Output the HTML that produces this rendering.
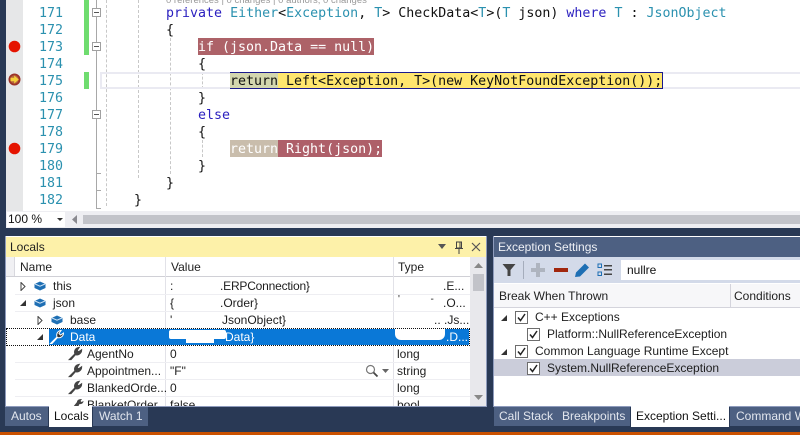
<!DOCTYPE html>
<html><head><meta charset="utf-8">
<style>
html,body{margin:0;padding:0;background:#293955;width:800px;height:435px;overflow:hidden}
#r{position:relative;width:800px;height:435px;overflow:hidden;background:#293955;font-family:"Liberation Sans",sans-serif;font-size:12px;color:#1e1e1e}
#r div,#r span.a,#r svg{position:absolute}
.c{font-family:"DejaVu Sans Mono","Liberation Mono",monospace;font-size:13.3px;line-height:17px;height:17px;white-space:pre;color:#111;margin-top:1px}
.n{font-family:"DejaVu Sans Mono","Liberation Mono",monospace;font-size:13.3px;line-height:17px;height:17px;left:39px;color:#2b91af;margin-top:1px}
.k{color:#2a1fbf}.t{color:#2b91af}
.u{white-space:pre;line-height:17px;height:17px;font-size:12px}
.hl{height:1px;background:#eeeef2}
.gd{width:0;border-left:1px dashed #c8c8c8}
.bx{width:7px;height:7px;border:1px solid #a0a0a0;background:#fff;left:92px}
.bx:after{content:"";position:absolute;left:1px;top:3px;width:5px;height:1px;background:#555}
.cb{width:11px;height:11px;border:1px solid #6d6d6d;background:#fff}
</style></head><body><div id="r">

<!-- editor -->
<div style="left:6px;top:0;width:794px;height:211px;background:#fff"></div>
<div style="left:6px;top:0;width:17px;height:211px;background:#e6e7e8"></div>
<div style="left:84px;top:0;width:5px;height:55px;background:#6fdc6f"></div>
<div style="left:84px;top:72px;width:5px;height:17px;background:#6fdc6f"></div>
<div style="left:96px;top:0;width:1px;height:209px;background:#a8a8a8"></div>
<div style="left:97px;top:173px;width:4px;height:1px;background:#a8a8a8"></div>
<div style="left:97px;top:190px;width:4px;height:1px;background:#a8a8a8"></div>
<div style="left:97px;top:208px;width:4px;height:1px;background:#a8a8a8"></div>
<div class="gd" style="left:106px;top:0;height:206px"></div>
<div class="gd" style="left:138px;top:0;height:178px"></div>
<div class="gd" style="left:170px;top:38px;height:136px"></div>
<div class="gd" style="left:202px;top:72px;height:17px"></div>
<div class="gd" style="left:202px;top:140px;height:17px"></div>

<div style="left:100px;top:72px;width:700px;height:13px;border:2px solid #eaeaf2;border-right:0"></div>
<div style="left:230px;top:72px;width:432px;height:15px;background:#ffe66e;border:1px solid #1a1a8c;border-left:0"></div>
<div style="left:230px;top:73px;width:48px;height:15px;background:#d3d6ae"></div>
<div style="left:230px;top:72px;width:48px;height:1px;background:#1a1a8c"></div>
<div style="left:198px;top:38px;width:176px;height:17px;background:#ad6268"></div>
<div style="left:230px;top:140px;width:48px;height:17px;background:#c9bdac"></div>
<div style="left:278px;top:140px;width:104px;height:17px;background:#ae5f69"></div>

<div class="c" style="left:166px;top:-9px;font-size:9.5px;color:#9a9a9a;font-family:'Liberation Sans',sans-serif">0 references | 0 changes | 0 authors, 0 changes</div>

<div class="n" style="top:4px">171</div>
<div class="n" style="top:21px">172</div>
<div class="n" style="top:38px">173</div>
<div class="n" style="top:55px">174</div>
<div class="n" style="top:72px">175</div>
<div class="n" style="top:89px">176</div>
<div class="n" style="top:106px">177</div>
<div class="n" style="top:123px">178</div>
<div class="n" style="top:140px">179</div>
<div class="n" style="top:157px">180</div>
<div class="n" style="top:174px">181</div>
<div class="n" style="top:191px">182</div>

<div class="bx" style="top:8px"></div>
<div class="bx" style="top:42px"></div>
<div class="bx" style="top:110px"></div>

<div class="c" style="left:166px;top:4px"><span class="k">private</span> <span class="t">Either</span>&lt;<span class="t">Exception</span>, <span class="t">T</span>&gt; CheckData&lt;<span class="t">T</span>&gt;(<span class="t">T</span> json) <span class="k">where</span> <span class="t">T</span> : <span class="t">JsonObject</span></div>
<div class="c" style="left:166px;top:21px">{</div>
<div class="c" style="left:198px;top:38px;color:#fff">if (json.Data == null)</div>
<div class="c" style="left:198px;top:55px">{</div>
<div class="c" style="left:230px;top:72px">return Left&lt;Exception, T&gt;(new KeyNotFoundException());</div>
<div class="c" style="left:198px;top:89px">}</div>
<div class="c" style="left:198px;top:106px"><span class="k">else</span></div>
<div class="c" style="left:198px;top:123px">{</div>
<div class="c" style="left:230px;top:140px;color:#fff">return Right(json);</div>
<div class="c" style="left:198px;top:157px">}</div>
<div class="c" style="left:166px;top:174px">}</div>
<div class="c" style="left:134px;top:191px">}</div>

<svg style="left:8px;top:40px" width="14" height="14"><circle cx="6.500" cy="6.500" r="5.800" fill="#e51400"/></svg>
<svg style="left:8px;top:142px" width="14" height="14"><circle cx="6.500" cy="6.500" r="5.800" fill="#e51400"/></svg>
<svg style="left:8px;top:73px" width="14" height="14"><circle cx="6.500" cy="6.500" r="6" fill="#9c3328"/><circle cx="6.500" cy="6.500" r="4.200" fill="#b8663c"/><path d="M2.500 4.800h3.700V2.500L10.800 6.500 6.200 10.500V8.200H2.500z" fill="#f4cf3a"/></svg>

<!-- zoom bar -->
<div style="left:6px;top:211px;width:794px;height:17px;background:#eeeef2"></div>
<div style="left:7px;top:212px;width:58px;height:15px;background:#fff"></div>
<div class="u" style="left:8px;top:211px;color:#111">100 %</div>
<svg style="left:57px;top:218px" width="7" height="4"><path d="M0 0h6L3 3z" fill="#333"/></svg>
<svg style="left:72px;top:215px" width="6" height="10"><path d="M5 0v9L0 4.500z" fill="#8a8a90"/></svg>
<div style="left:83px;top:215px;width:717px;height:9px;background:#c2c3c9"></div>

<!-- Locals -->
<div style="left:5px;top:236px;width:482px;height:171px;background:#fff"></div>
<div style="left:6px;top:237px;width:481px;height:20px;background:#fdf1a9"></div>
<div class="u" style="left:10px;top:239px;color:#222">Locals</div>
<svg style="left:438px;top:244px" width="9" height="6"><path d="M0 0h8L4 5z" fill="#555"/></svg>
<svg style="left:454px;top:241px" width="10" height="13"><path d="M2.500 1h5v6h-5zM1 7.500h8M5 8v5M6 1v6" fill="none" stroke="#444"/></svg>
<svg style="left:471px;top:242px" width="10" height="10"><path d="M1 1l8 8M9 1L1 9" stroke="#555" stroke-width="1.200"/></svg>

<div style="left:6px;top:257px;width:464px;height:19px;background:#fff;border-bottom:1px solid #d0d0d6"></div>
<div style="left:6px;top:257px;width:8px;height:19px;background:#f0f0f3"></div>
<div style="left:14px;top:257px;width:1px;height:19px;background:#d8d8de"></div>
<div style="left:165px;top:257px;width:1px;height:150px;background:#e2e2e8"></div>
<div style="left:393px;top:257px;width:1px;height:150px;background:#e2e2e8"></div>
<div class="u" style="left:20px;top:259px">Name</div>
<div class="u" style="left:171px;top:259px">Value</div>
<div class="u" style="left:398px;top:259px">Type</div>

<div class="hl" style="left:15px;top:294px;width:455px"></div>
<div class="hl" style="left:15px;top:311px;width:455px"></div>
<div class="hl" style="left:15px;top:362px;width:455px"></div>
<div class="hl" style="left:15px;top:379px;width:455px"></div>
<div class="hl" style="left:15px;top:396px;width:455px"></div>

<svg style="left:20px;top:282px" width="6" height="9"><path d="M1 .5L5 4.500 1 8.500z" fill="#fff" stroke="#444"/></svg>
<svg style="left:20px;top:299px" width="7" height="8"><path d="M6 1v6H0z" fill="#333"/></svg>
<svg style="left:37px;top:316px" width="6" height="9"><path d="M1 .5L5 4.500 1 8.500z" fill="#fff" stroke="#444"/></svg>
<svg style="left:34px;top:281px" width="12" height="10"><path d="M.5 3L6 .5 11.500 3v4L6 9.500.5 7z" fill="#1e6fb4"/><path d="M1 3l5 2.200L11 3" stroke="#cfe3f4" fill="none"/></svg>
<svg style="left:34px;top:298px" width="12" height="10"><path d="M.5 3L6 .5 11.500 3v4L6 9.500.5 7z" fill="#1e6fb4"/><path d="M1 3l5 2.200L11 3" stroke="#cfe3f4" fill="none"/></svg>
<svg style="left:51px;top:315px" width="12" height="10"><path d="M.5 3L6 .5 11.500 3v4L6 9.500.5 7z" fill="#1e6fb4"/><path d="M1 3l5 2.200L11 3" stroke="#cfe3f4" fill="none"/></svg>

<div class="u" style="left:53px;top:278px">this</div>
<div class="u" style="left:53px;top:295px">json</div>
<div class="u" style="left:70px;top:312px">base</div>
<div class="u" style="left:170px;top:278px">:</div>
<div class="u" style="left:220px;top:278px;letter-spacing:-.2px">.ERPConnection}</div>
<div class="u" style="left:170px;top:295px">{</div>
<div class="u" style="left:220px;top:295px">.Order}</div>
<div class="u" style="left:170px;top:312px">'</div>
<div class="u" style="left:222px;top:312px">JsonObject}</div>
<div class="u" style="left:443px;top:278px">.E...</div>
<div class="u" style="left:443px;top:295px">.O...</div>
<div class="u" style="left:434px;top:312px">.. .Js...</div>
<div class="u" style="left:398px;top:291px;font-size:10px">'&nbsp;&nbsp;&nbsp;&nbsp;&nbsp;&nbsp;&nbsp;&nbsp;&nbsp;&nbsp;&nbsp;-</div>

<!-- selected row -->
<div style="left:49px;top:329px;width:420px;height:16px;background:#0a78d7"></div>
<div style="left:6px;top:328px;width:462px;height:16px;border:1px dotted #111"></div>
<svg style="left:37px;top:333px" width="7" height="8"><path d="M6 1v6H0z" fill="#333"/></svg>
<svg style="left:49px;top:329px" width="16" height="16"><path d="M1.500 14.500L8 8C7 5 8.500 2 12 1.500L10 4.500l1.500 1.500 3-2C14.500 7.500 11 9.500 8.500 8.500L3 14.500z" fill="#333" stroke="#fff"/></svg>
<div class="u" style="left:70px;top:329px;color:#fff">Data</div>
<div style="left:169px;top:330px;width:57px;height:9px;background:#fff;border-radius:2px"></div>
<div style="left:186px;top:339px;width:28px;height:4px;background:#fff"></div>
<div class="u" style="left:225px;top:329px;color:#fff">Data}</div>
<div style="left:395px;top:329px;width:50px;height:11px;background:#fff;border-radius:0 0 6px 6px"></div>
<div class="u" style="left:446px;top:329px;color:#fff">.D...</div>

<svg style="left:68px;top:346px" width="15" height="15"><path d="M1.500 13.500L7 8C6 5 7.500 2 11 1.500L9 4.500l1.500 1.500 3-2C13.500 7.500 10 9.500 7.500 8.500L3 13.500z" fill="#444" stroke="#444" stroke-width="1.300"/></svg>
<svg style="left:68px;top:363px" width="15" height="15"><path d="M1.500 13.500L7 8C6 5 7.500 2 11 1.500L9 4.500l1.500 1.500 3-2C13.500 7.500 10 9.500 7.500 8.500L3 13.500z" fill="#444" stroke="#444" stroke-width="1.300"/></svg>
<svg style="left:68px;top:380px" width="15" height="15"><path d="M1.500 13.500L7 8C6 5 7.500 2 11 1.500L9 4.500l1.500 1.500 3-2C13.500 7.500 10 9.500 7.500 8.500L3 13.500z" fill="#444" stroke="#444" stroke-width="1.300"/></svg>
<svg style="left:72px;top:399px" width="12" height="8"><path d="M1 8L5 3C5 1 7 0 10 0L8.500 2l1 1 2-1c0 2-2 3.500-4 3L6 8z" fill="#444"/></svg>

<div class="u" style="left:87px;top:346px">AgentNo</div>
<div class="u" style="left:87px;top:363px">Appointmen...</div>
<div class="u" style="left:87px;top:380px">BlankedOrde...</div>
<div style="left:87px;top:397px;width:80px;height:9px;overflow:hidden"><span class="u" style="position:absolute;top:0;left:0">BlanketOrder</span></div>
<div class="u" style="left:170px;top:346px">0</div>
<div class="u" style="left:170px;top:363px">"F"</div>
<div class="u" style="left:170px;top:380px">0</div>
<div style="left:170px;top:397px;width:60px;height:9px;overflow:hidden"><span class="u" style="position:absolute;top:0;left:0">false</span></div>
<div class="u" style="left:397px;top:346px">long</div>
<div class="u" style="left:397px;top:363px">string</div>
<div class="u" style="left:397px;top:380px">long</div>
<div style="left:397px;top:397px;width:60px;height:9px;overflow:hidden"><span class="u" style="position:absolute;top:0;left:0">bool</span></div>
<svg style="left:365px;top:364px" width="14" height="14"><circle cx="5.500" cy="5.500" r="4" fill="none" stroke="#777" stroke-width="1.200"/><path d="M8.500 8.500l4 4" stroke="#444" stroke-width="1.800"/></svg>
<svg style="left:382px;top:369px" width="8" height="5"><path d="M0 0h7L3.500 4z" fill="#666"/></svg>

<!-- locals scrollbar -->
<div style="left:470px;top:257px;width:17px;height:150px;background:#e8e8ec"></div>
<svg style="left:474px;top:263px" width="9" height="5"><path d="M0 5L4.500 0 9 5z" fill="#888"/></svg>
<div style="left:473px;top:274px;width:11px;height:17px;background:#c2c3c9"></div>
<svg style="left:474px;top:395px" width="9" height="5"><path d="M0 0h9L4.500 5z" fill="#888"/></svg>

<div style="left:5px;top:406px;width:482px;height:1px;background:#8e9bbc"></div>
<div style="left:5px;top:236px;width:1px;height:171px;background:#8e9bbc"></div>
<div style="left:486px;top:236px;width:1px;height:171px;background:#8e9bbc"></div>

<!-- locals tabs -->
<div style="left:5px;top:407px;width:43px;height:19px;background:#4d6082"></div>
<div class="u" style="left:11px;top:408px;color:#e2e6ee">Autos</div>
<div style="left:49px;top:406px;width:43px;height:21px;background:#fff"></div>
<div class="u" style="left:54px;top:408px;color:#111">Locals</div>
<div style="left:93px;top:407px;width:55px;height:19px;background:#4d6082"></div>
<div class="u" style="left:99px;top:408px;color:#e2e6ee">Watch 1</div>

<!-- Exception settings -->
<div style="left:493px;top:236px;width:307px;height:171px;background:#fff"></div>
<div style="left:494px;top:237px;width:306px;height:20px;background:#4d6082"></div>
<div class="u" style="left:498px;top:239px;color:#eef0f5">Exception Settings</div>
<div style="left:494px;top:257px;width:306px;height:26px;background:#d3dae9"></div>
<svg style="left:502px;top:263px" width="14" height="14"><path d="M.5 1h13L8.500 7v6h-3V7z" fill="#444"/></svg>
<div style="left:523px;top:261px;width:1px;height:18px;background:#a5adbc"></div>
<svg style="left:531px;top:263px" width="14" height="14"><path d="M5 0h4v5h5v4H9v5H5V9H0V5h5z" fill="#aeb4bf"/></svg>
<div style="left:554px;top:268px;width:14px;height:4px;background:#a1260d"></div>
<svg style="left:575px;top:263px" width="15" height="15"><path d="M0 14l1-4.500L10 .5l4 4L5 13.500z" fill="#1e6fb4"/></svg>
<svg style="left:597px;top:263px" width="16" height="14"><path d="M1 1h3.500v3.500H1zM1 9h3.500v3.500H1z" fill="none" stroke="#1e6fb4"/><path d="M7 2h8v1.500H7zM7 6h8v1.500H7zM7 10.500h8V12H7z" fill="#444"/></svg>
<div style="left:621px;top:260px;width:179px;height:20px;background:#fff"></div>
<div class="u" style="left:627px;top:262px;color:#111">nullre</div>

<div style="left:494px;top:284px;width:306px;height:23px;background:#f7f7f9;border-bottom:1px solid #d4d4dc"></div>
<div style="left:730px;top:284px;width:1px;height:23px;background:#d4d4dc"></div>
<div class="u" style="left:499px;top:288px">Break When Thrown</div>
<div class="u" style="left:734px;top:288px">Conditions</div>

<svg style="left:501px;top:314px" width="7" height="8"><path d="M6 1v6H0z" fill="#333"/></svg>
<svg style="left:501px;top:348px" width="7" height="8"><path d="M6 1v6H0z" fill="#333"/></svg>

<div class="cb" style="left:515px;top:311px"></div>
<div class="cb" style="left:527px;top:328px"></div>
<div class="cb" style="left:515px;top:345px"></div>
<div style="left:494px;top:359px;width:306px;height:17px;background:#cbcdda"></div>
<div class="cb" style="left:527px;top:362px"></div>
<svg style="left:516px;top:312px" width="11" height="11"><path d="M2 5.500l2.500 3L9 2" fill="none" stroke="#222" stroke-width="1.500"/></svg>
<svg style="left:528px;top:329px" width="11" height="11"><path d="M2 5.500l2.500 3L9 2" fill="none" stroke="#222" stroke-width="1.500"/></svg>
<svg style="left:516px;top:346px" width="11" height="11"><path d="M2 5.500l2.500 3L9 2" fill="none" stroke="#222" stroke-width="1.500"/></svg>
<svg style="left:528px;top:363px" width="11" height="11"><path d="M2 5.500l2.500 3L9 2" fill="none" stroke="#222" stroke-width="1.500"/></svg>

<div class="u" style="left:535px;top:309px">C++ Exceptions</div>
<div class="u" style="left:547px;top:326px">Platform::NullReferenceException</div>
<div class="u" style="left:535px;top:343px">Common Language Runtime Except</div>
<div class="u" style="left:547px;top:360px">System.NullReferenceException</div>

<div style="left:493px;top:236px;width:1px;height:171px;background:#8e9bbc"></div>
<div style="left:493px;top:406px;width:307px;height:1px;background:#8e9bbc"></div>

<!-- right tabs -->
<div style="left:494px;top:407px;width:136px;height:19px;background:#4d6082"></div>
<div class="u" style="left:499px;top:408px;color:#e2e6ee">Call Stack</div>
<div class="u" style="left:562px;top:408px;color:#e2e6ee">Breakpoints</div>
<div style="left:631px;top:406px;width:98px;height:21px;background:#fff"></div>
<div class="u" style="left:636px;top:408px;color:#111">Exception Setti...</div>
<div style="left:730px;top:407px;width:70px;height:19px;background:#4d6082"></div>
<div class="u" style="left:736px;top:408px;color:#e2e6ee">Command Wi</div>

<!-- status bar -->
<div style="left:0;top:432px;width:800px;height:3px;background:#ca5100"></div>
</div></body></html>
